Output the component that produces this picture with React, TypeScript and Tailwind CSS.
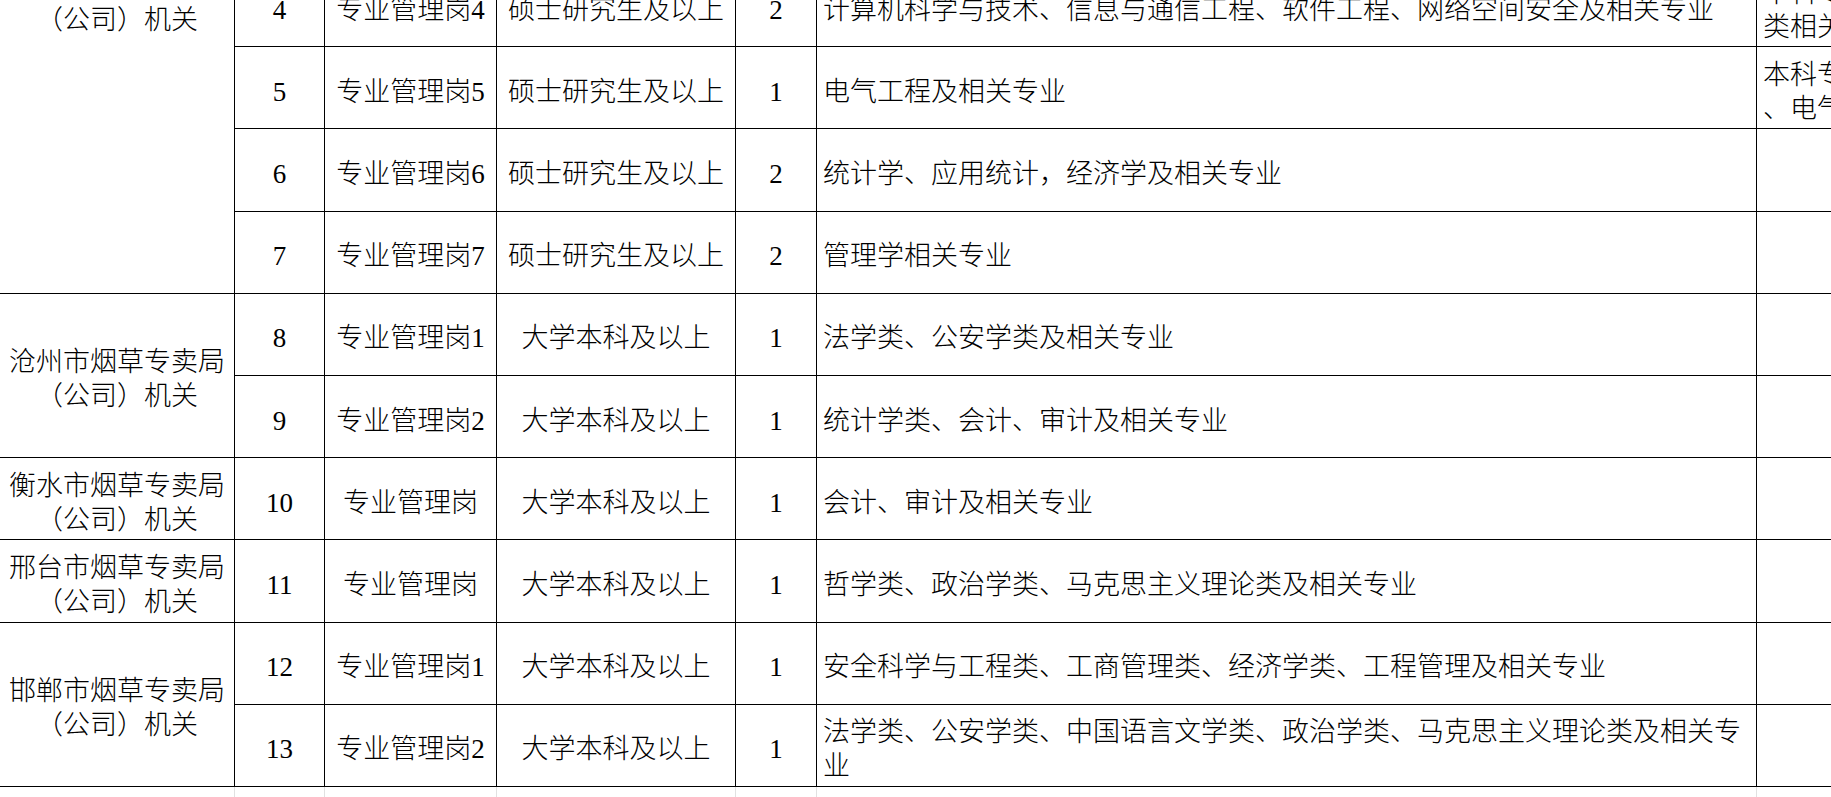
import React from "react";

type Row = {
  no: string;
  post: string;
  degree: string;
  count: string;
  major: string;
  note?: string[];
  unit?: { lines: string[]; span: number; top?: boolean };
};

const rows: Row[] = [
  {
    no: "4",
    post: "专业管理岗4",
    degree: "硕士研究生及以上",
    count: "2",
    major: "计算机科学与技术、信息与通信工程、软件工程、网络空间安全及相关专业",
    note: ["本科专业为计算机类、电子信息", "类相关专业"],
    unit: { lines: ["河北省烟草专卖局", "（公司）机关"], span: 4, top: true },
  },
  {
    no: "5",
    post: "专业管理岗5",
    degree: "硕士研究生及以上",
    count: "1",
    major: "电气工程及相关专业",
    note: ["本科专业为电气类、自动化类", "、电气工程相关专业"],
  },
  {
    no: "6",
    post: "专业管理岗6",
    degree: "硕士研究生及以上",
    count: "2",
    major: "统计学、应用统计，经济学及相关专业",
  },
  {
    no: "7",
    post: "专业管理岗7",
    degree: "硕士研究生及以上",
    count: "2",
    major: "管理学相关专业",
  },
  {
    no: "8",
    post: "专业管理岗1",
    degree: "大学本科及以上",
    count: "1",
    major: "法学类、公安学类及相关专业",
    unit: { lines: ["沧州市烟草专卖局", "（公司）机关"], span: 2 },
  },
  {
    no: "9",
    post: "专业管理岗2",
    degree: "大学本科及以上",
    count: "1",
    major: "统计学类、会计、审计及相关专业",
  },
  {
    no: "10",
    post: "专业管理岗",
    degree: "大学本科及以上",
    count: "1",
    major: "会计、审计及相关专业",
    unit: { lines: ["衡水市烟草专卖局", "（公司）机关"], span: 1 },
  },
  {
    no: "11",
    post: "专业管理岗",
    degree: "大学本科及以上",
    count: "1",
    major: "哲学类、政治学类、马克思主义理论类及相关专业",
    unit: { lines: ["邢台市烟草专卖局", "（公司）机关"], span: 1 },
  },
  {
    no: "12",
    post: "专业管理岗1",
    degree: "大学本科及以上",
    count: "1",
    major: "安全科学与工程类、工商管理类、经济学类、工程管理及相关专业",
    unit: { lines: ["邯郸市烟草专卖局", "（公司）机关"], span: 2 },
  },
  {
    no: "13",
    post: "专业管理岗2",
    degree: "大学本科及以上",
    count: "1",
    major: "法学类、公安学类、中国语言文学类、政治学类、马克思主义理论类及相关专业",
  },
];

const cell = "border-r border-b border-black p-0 pt-[8px] align-middle";

const App = () => {
  return (
    <main
      className="w-full h-[797px] overflow-hidden bg-white text-black text-[27px] leading-[34px] font-light"
      style={{ fontFamily: '"Liberation Serif", "Noto Sans CJK SC", serif' }}
    >
      <table className="-mt-[35px] w-[2087px] table-fixed border-separate border-spacing-0">
        <colgroup>
          <col className="w-[235px]" />
          <col className="w-[90px]" />
          <col className="w-[172px]" />
          <col className="w-[239px]" />
          <col className="w-[81px]" />
          <col className="w-[940px]" />
          <col className="w-[330px]" />
        </colgroup>
        <tbody>
          {rows.map((r) => (
            <tr key={r.no} className="h-[82.2px]">
              {r.unit && (
                <td
                  rowSpan={r.unit.span}
                  className={`border-r border-b border-black p-0 text-center ${
                    r.unit.top ? "align-top pt-[4px]" : "align-middle pt-[8px]"
                  }`}
                >
                  {r.unit.lines.map((l) => (
                    <div key={l}>{l}</div>
                  ))}
                </td>
              )}
              <td className={`${cell} text-center`}>{r.no}</td>
              <td className={`${cell} text-center whitespace-nowrap`}>{r.post}</td>
              <td className={`${cell} text-center whitespace-nowrap`}>{r.degree}</td>
              <td className={`${cell} text-center`}>{r.count}</td>
              <td className={`${cell} text-left pl-[6px] pr-[4px]`}>{r.major}</td>
              <td className={`${cell} text-left pl-[6px] whitespace-nowrap`}>
                {r.note?.map((l) => (
                  <div key={l}>{l}</div>
                ))}
              </td>
            </tr>
          ))}
          <tr className="h-[82px]">
            <td className="border-r border-[#e1e1e1]" />
            <td className="border-r border-[#e1e1e1]" />
            <td className="border-r border-[#e1e1e1]" />
            <td className="border-r border-[#e1e1e1]" />
            <td className="border-r border-[#e1e1e1]" />
            <td className="border-r border-[#e1e1e1]" />
            <td />
          </tr>
        </tbody>
      </table>
    </main>
  );
};

export default App;
